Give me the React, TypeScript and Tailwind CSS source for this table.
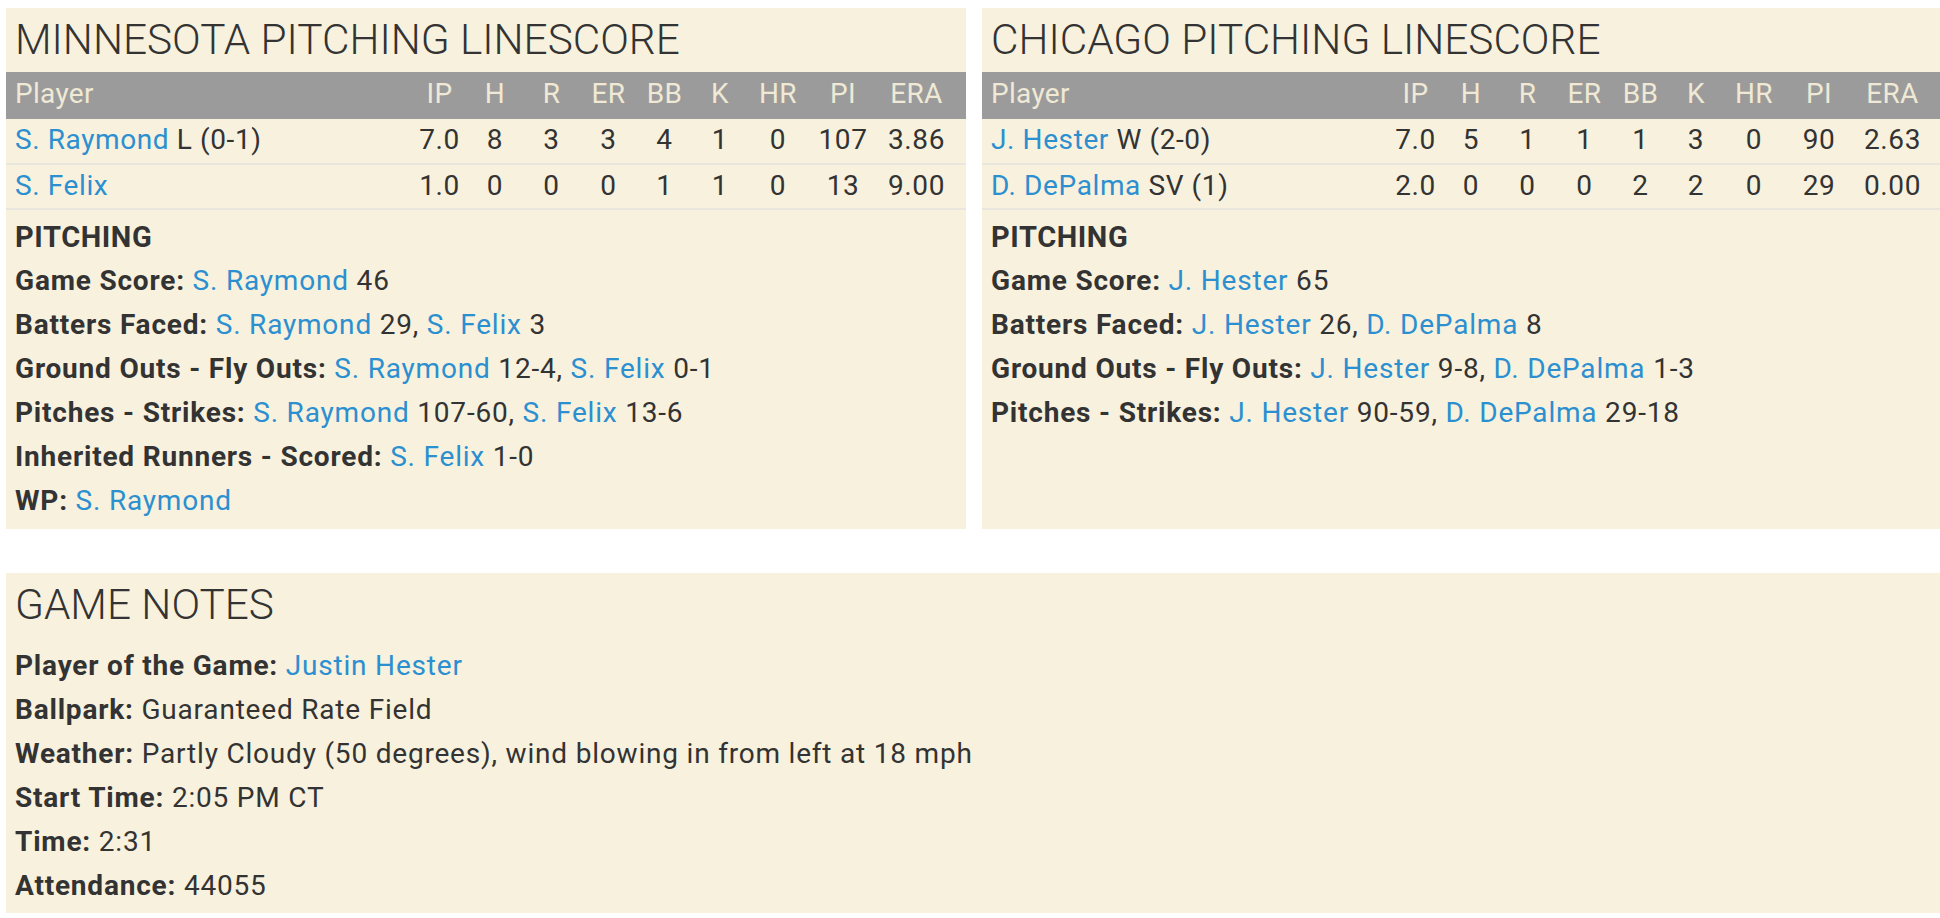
const cols = ["IP", "H", "R", "ER", "BB", "K", "HR", "PI", "ERA"];

type Row = { name: string; note: string; stats: string[] };
type Part = { t: string; link?: boolean };
type Line = { label: string; parts: Part[] };

const link = "text-[#2b8fd0]";

const minnesota = {
  title: "MINNESOTA PITCHING LINESCORE",
  rows: [
    { name: "S. Raymond", note: "L (0-1)", stats: ["7.0", "8", "3", "3", "4", "1", "0", "107", "3.86"] },
    { name: "S. Felix", note: "", stats: ["1.0", "0", "0", "0", "1", "1", "0", "13", "9.00"] },
  ] as Row[],
  lines: [
    { label: "Game Score:", parts: [{ t: "S. Raymond", link: true }, { t: " 46" }] },
    {
      label: "Batters Faced:",
      parts: [{ t: "S. Raymond", link: true }, { t: " 29, " }, { t: "S. Felix", link: true }, { t: " 3" }],
    },
    {
      label: "Ground Outs - Fly Outs:",
      parts: [{ t: "S. Raymond", link: true }, { t: " 12-4, " }, { t: "S. Felix", link: true }, { t: " 0-1" }],
    },
    {
      label: "Pitches - Strikes:",
      parts: [{ t: "S. Raymond", link: true }, { t: " 107-60, " }, { t: "S. Felix", link: true }, { t: " 13-6" }],
    },
    { label: "Inherited Runners - Scored:", parts: [{ t: "S. Felix", link: true }, { t: " 1-0" }] },
    { label: "WP:", parts: [{ t: "S. Raymond", link: true }] },
  ] as Line[],
};

const chicago = {
  title: "CHICAGO PITCHING LINESCORE",
  rows: [
    { name: "J. Hester", note: "W (2-0)", stats: ["7.0", "5", "1", "1", "1", "3", "0", "90", "2.63"] },
    { name: "D. DePalma", note: "SV (1)", stats: ["2.0", "0", "0", "0", "2", "2", "0", "29", "0.00"] },
  ] as Row[],
  lines: [
    { label: "Game Score:", parts: [{ t: "J. Hester", link: true }, { t: " 65" }] },
    {
      label: "Batters Faced:",
      parts: [{ t: "J. Hester", link: true }, { t: " 26, " }, { t: "D. DePalma", link: true }, { t: " 8" }],
    },
    {
      label: "Ground Outs - Fly Outs:",
      parts: [{ t: "J. Hester", link: true }, { t: " 9-8, " }, { t: "D. DePalma", link: true }, { t: " 1-3" }],
    },
    {
      label: "Pitches - Strikes:",
      parts: [{ t: "J. Hester", link: true }, { t: " 90-59, " }, { t: "D. DePalma", link: true }, { t: " 29-18" }],
    },
  ] as Line[],
};

const notes: Line[] = [
  { label: "Player of the Game:", parts: [{ t: "Justin Hester", link: true }] },
  { label: "Ballpark:", parts: [{ t: "Guaranteed Rate Field" }] },
  { label: "Weather:", parts: [{ t: "Partly Cloudy (50 degrees), wind blowing in from left at 18 mph" }] },
  { label: "Start Time:", parts: [{ t: "2:05 PM CT" }] },
  { label: "Time:", parts: [{ t: "2:31" }] },
  { label: "Attendance:", parts: [{ t: "44055" }] },
];

const grid =
  "grid grid-cols-[1fr_55px_56px_57px_57px_55px_56px_60px_70px_77px] pl-[9px] pr-[11px]";

const NoteLine = ({ line }: { line: Line }) => (
  <div className="text-[28px] leading-[44px] tracking-[0.8px] text-[#333] whitespace-nowrap">
    <span className="font-bold">{line.label}</span>{" "}
    {line.parts.map((p, i) => (
      <span key={i} className={p.link ? link : ""}>
        {p.t}
      </span>
    ))}
  </div>
);

const Title = ({ text }: { text: string }) => (
  <h2 className="h-[64px] px-[9px] text-[42.3px] leading-[64px] font-light text-[#333] whitespace-nowrap">
    {text}
  </h2>
);

const Linescore = ({ data }: { data: typeof minnesota }) => (
  <div className="w-[960px] h-[521px] bg-[#f7f1de]">
    <Title text={data.title} />
    <div
      className={`${grid} h-[47px] items-center bg-[#9b9b9b] text-[#efe9d5] text-[28px] tracking-[0.3px] pb-[4px]`}
    >
      <div>Player</div>
      {cols.map((c) => (
        <div key={c} className="text-center">
          {c}
        </div>
      ))}
    </div>
    {data.rows.map((r) => (
      <div
        key={r.name}
        className={`${grid} h-[45.5px] items-center border-b-2 border-[#e9e6de] text-[28px] tracking-[0.6px] text-[#333] pb-[4px]`}
      >
        <div className="whitespace-nowrap">
          <span className={link}>{r.name}</span>
          {r.note && " " + r.note}
        </div>
        {r.stats.map((s, i) => (
          <div key={i} className="text-center">
            {s}
          </div>
        ))}
      </div>
    ))}
    <div className="px-[9px] pt-[5px]">
      <div className="text-[29px] leading-[44px] tracking-[0.6px] font-bold text-[#333]">PITCHING</div>
      {data.lines.map((l) => (
        <NoteLine key={l.label} line={l} />
      ))}
    </div>
  </div>
);

export default function App() {
  return (
    <div className="w-full overflow-hidden bg-white font-['Roboto',sans-serif]">
      <div className="w-[1948px] pl-[6px] pt-[8px] pb-[5px]">
        <div className="flex gap-[16px]">
          <Linescore data={minnesota} />
          <Linescore data={chicago} />
        </div>
        <div className="mt-[44px] w-[1936px] h-[340px] bg-[#f7f1de]">
          <Title text="GAME NOTES" />
          <div className="px-[9px] pt-[7px]">
            {notes.map((l) => (
              <NoteLine key={l.label} line={l} />
            ))}
          </div>
        </div>
      </div>
    </div>
  );
}
